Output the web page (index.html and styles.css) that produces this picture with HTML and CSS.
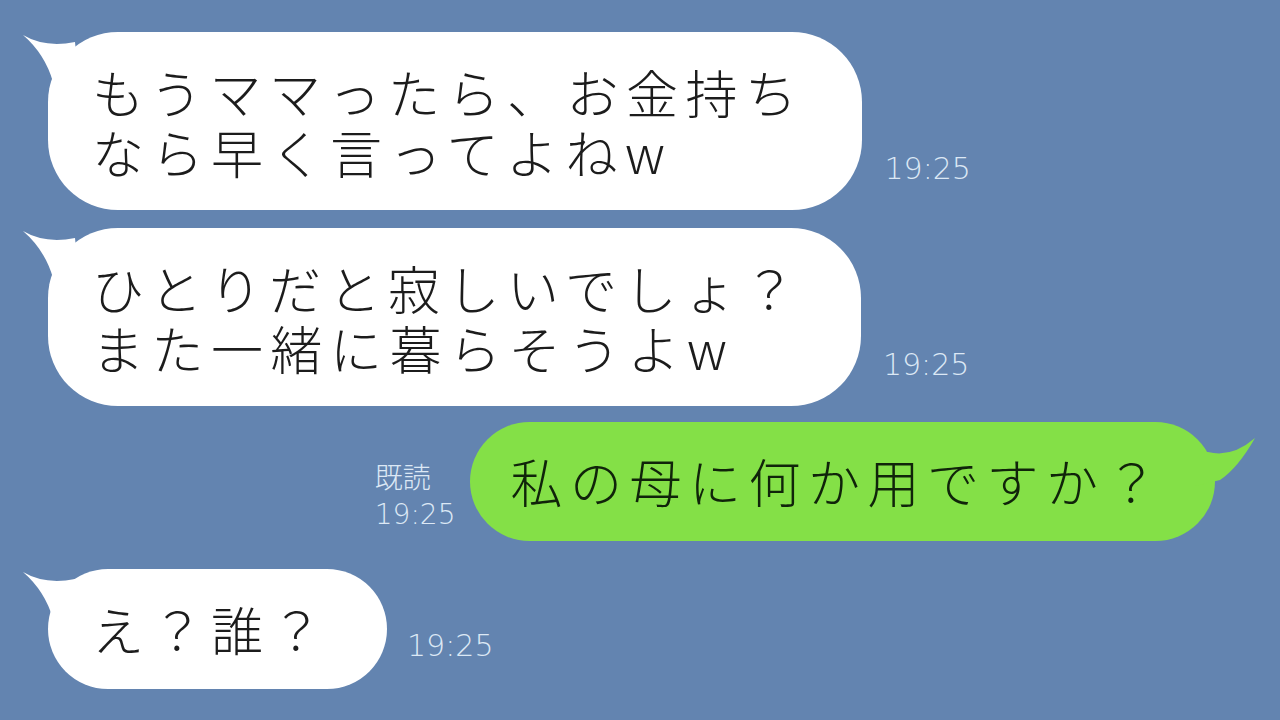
FILE: index.html
```html
<!DOCTYPE html>
<html lang="ja">
<head>
  <meta charset="UTF-8">
  <title>トーク</title>
  <link rel="stylesheet" href="styles.css">
</head>
<body>

  <div class="chat">

    <div class="fila recibido primera">
      <div class="globo blanco">
        <svg class="cola" viewBox="0 0 70 70" width="70" height="70"><path d="M3,3 Q25,16 55,10 L60,60 L33,50 Q25,22 3,3 Z"/></svg>
        <p>もうママったら、お金持ち<br>なら早く言ってよねw</p>
      </div>
      <span class="hora">19:25</span>
    </div>

    <div class="fila recibido">
      <div class="globo blanco">
        <svg class="cola" viewBox="0 0 70 70" width="70" height="70"><path d="M3,3 Q25,16 55,10 L60,60 L33,50 Q25,22 3,3 Z"/></svg>
        <p>ひとりだと寂しいでしょ？<br>また一緒に暮らそうよw</p>
      </div>
      <span class="hora">19:25</span>
    </div>

    <div class="fila enviado">
      <div class="leido">
        <span>既読</span>
        <span>19:25</span>
      </div>
      <div class="globo verde">
        <svg class="cola" viewBox="0 0 70 70" width="70" height="70"><path d="M65,16 Q42,36 18,30 L5,30 L5,64 L30,58 Q48,46 65,16 Z"/></svg>
        <p>私の母に何か用ですか？</p>
      </div>
    </div>

    <div class="fila recibido corta">
      <div class="globo blanco">
        <svg class="cola" viewBox="0 0 70 70" width="70" height="70"><path d="M3,3 Q25,16 55,10 L60,60 L33,50 Q25,22 3,3 Z"/></svg>
        <p>え？誰？</p>
      </div>
      <span class="hora">19:25</span>
    </div>

  </div>

</body>
</html>
```

FILE: styles.css
```css
html, body {
  margin: 0;
  height: 100%;
}
body {
  background-color: #6384b0;
  font-family: "Noto Sans CJK JP", "Noto Sans", sans-serif;
  overflow: hidden;
}
.chat {
  display: flex;
  flex-direction: column;
  padding: 32px 0 0 48px;
}
.fila {
  display: flex;
  align-items: flex-end;
}
.fila + .fila { margin-top: 18px; }
.fila.enviado {
  margin-top: 16px;
  justify-content: flex-end;
  padding-right: 65px;
}
.fila.corta { margin-top: 28px; }

.globo {
  position: relative;
  border-radius: 70px;
  padding: 30px 58px 28px 44px;
}
.globo p {
  margin: 0;
  font-size: 52px;
  line-height: 60px;
  letter-spacing: 7.5px;
  font-weight: 300;
  white-space: nowrap;
}
.blanco {
  background-color: #ffffff;
  color: #1c1c1c;
}
.blanco .cola {
  position: absolute;
  left: -28px;
  top: 0;
  fill: #ffffff;
}
.verde {
  background-color: #84e047;
  color: #10240a;
  padding: 29px 50px 30px 40px;
  border-radius: 60px;
}
.verde .cola {
  position: absolute;
  right: -45px;
  top: 0;
  fill: #84e047;
}
.fila.corta .globo {
  border-radius: 60px;
  padding: 30px 57px 30px 44px;
}

.hora {
  font-family: "DejaVu Sans", sans-serif;
  font-weight: 200;
  font-size: 30px;
  color: #dce8f5;
  margin: 0 0 24px 22px;
}
.fila.corta .hora {
  margin-left: 20px;
  margin-bottom: 26px;
}
.leido {
  display: flex;
  flex-direction: column;
  margin: 0 15px 8px 0;
  font-family: "DejaVu Sans", "Noto Sans CJK JP", sans-serif;
  font-weight: 200;
  font-size: 28px;
  line-height: 36px;
  color: #dce8f5;
}
```
